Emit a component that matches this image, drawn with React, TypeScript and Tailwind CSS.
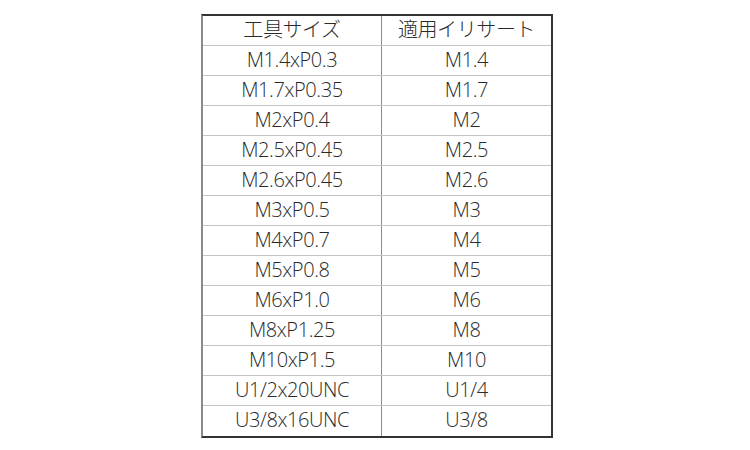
const rows: [string, string][] = [
  ['M1.4xP0.3', 'M1.4'],
  ['M1.7xP0.35', 'M1.7'],
  ['M2xP0.4', 'M2'],
  ['M2.5xP0.45', 'M2.5'],
  ['M2.6xP0.45', 'M2.6'],
  ['M3xP0.5', 'M3'],
  ['M4xP0.7', 'M4'],
  ['M5xP0.8', 'M5'],
  ['M6xP1.0', 'M6'],
  ['M8xP1.25', 'M8'],
  ['M10xP1.5', 'M10'],
  ['U1/2x20UNC', 'U1/4'],
  ['U3/8x16UNC', 'U3/8'],
];

const Row = ({ left, right, last }: { left: string; right: string; last?: boolean }) => (
  <div className={`flex h-[30px] ${last ? '' : 'border-b border-[#c4c4c4]'}`}>
    <div className="flex w-[179px] items-center justify-center border-r border-[#8e8e8e] pb-[2px]">{left}</div>
    <div className="flex flex-1 items-center justify-center pb-[2px]">{right}</div>
  </div>
);

export default function App() {
  return (
    <div className="h-[450px] w-[750px] bg-white pt-[14px]">
      <div
        className="ml-[201px] w-[352px] border-2 border-t-[#333] border-r-[#333] border-b-[#333] border-l-[#8a8a8a] text-[20px] font-light leading-none tracking-[-0.4px] text-[#2a2a2a]"
        style={{ fontFamily: '"Open Sans", "Noto Sans CJK JP", sans-serif' }}
      >
        <Row left="工具サイズ" right="適用イリサート" />
        {rows.map(([l, r], i) => (
          <Row key={l} left={l} right={r} last={i === rows.length - 1} />
        ))}
      </div>
    </div>
  );
}
